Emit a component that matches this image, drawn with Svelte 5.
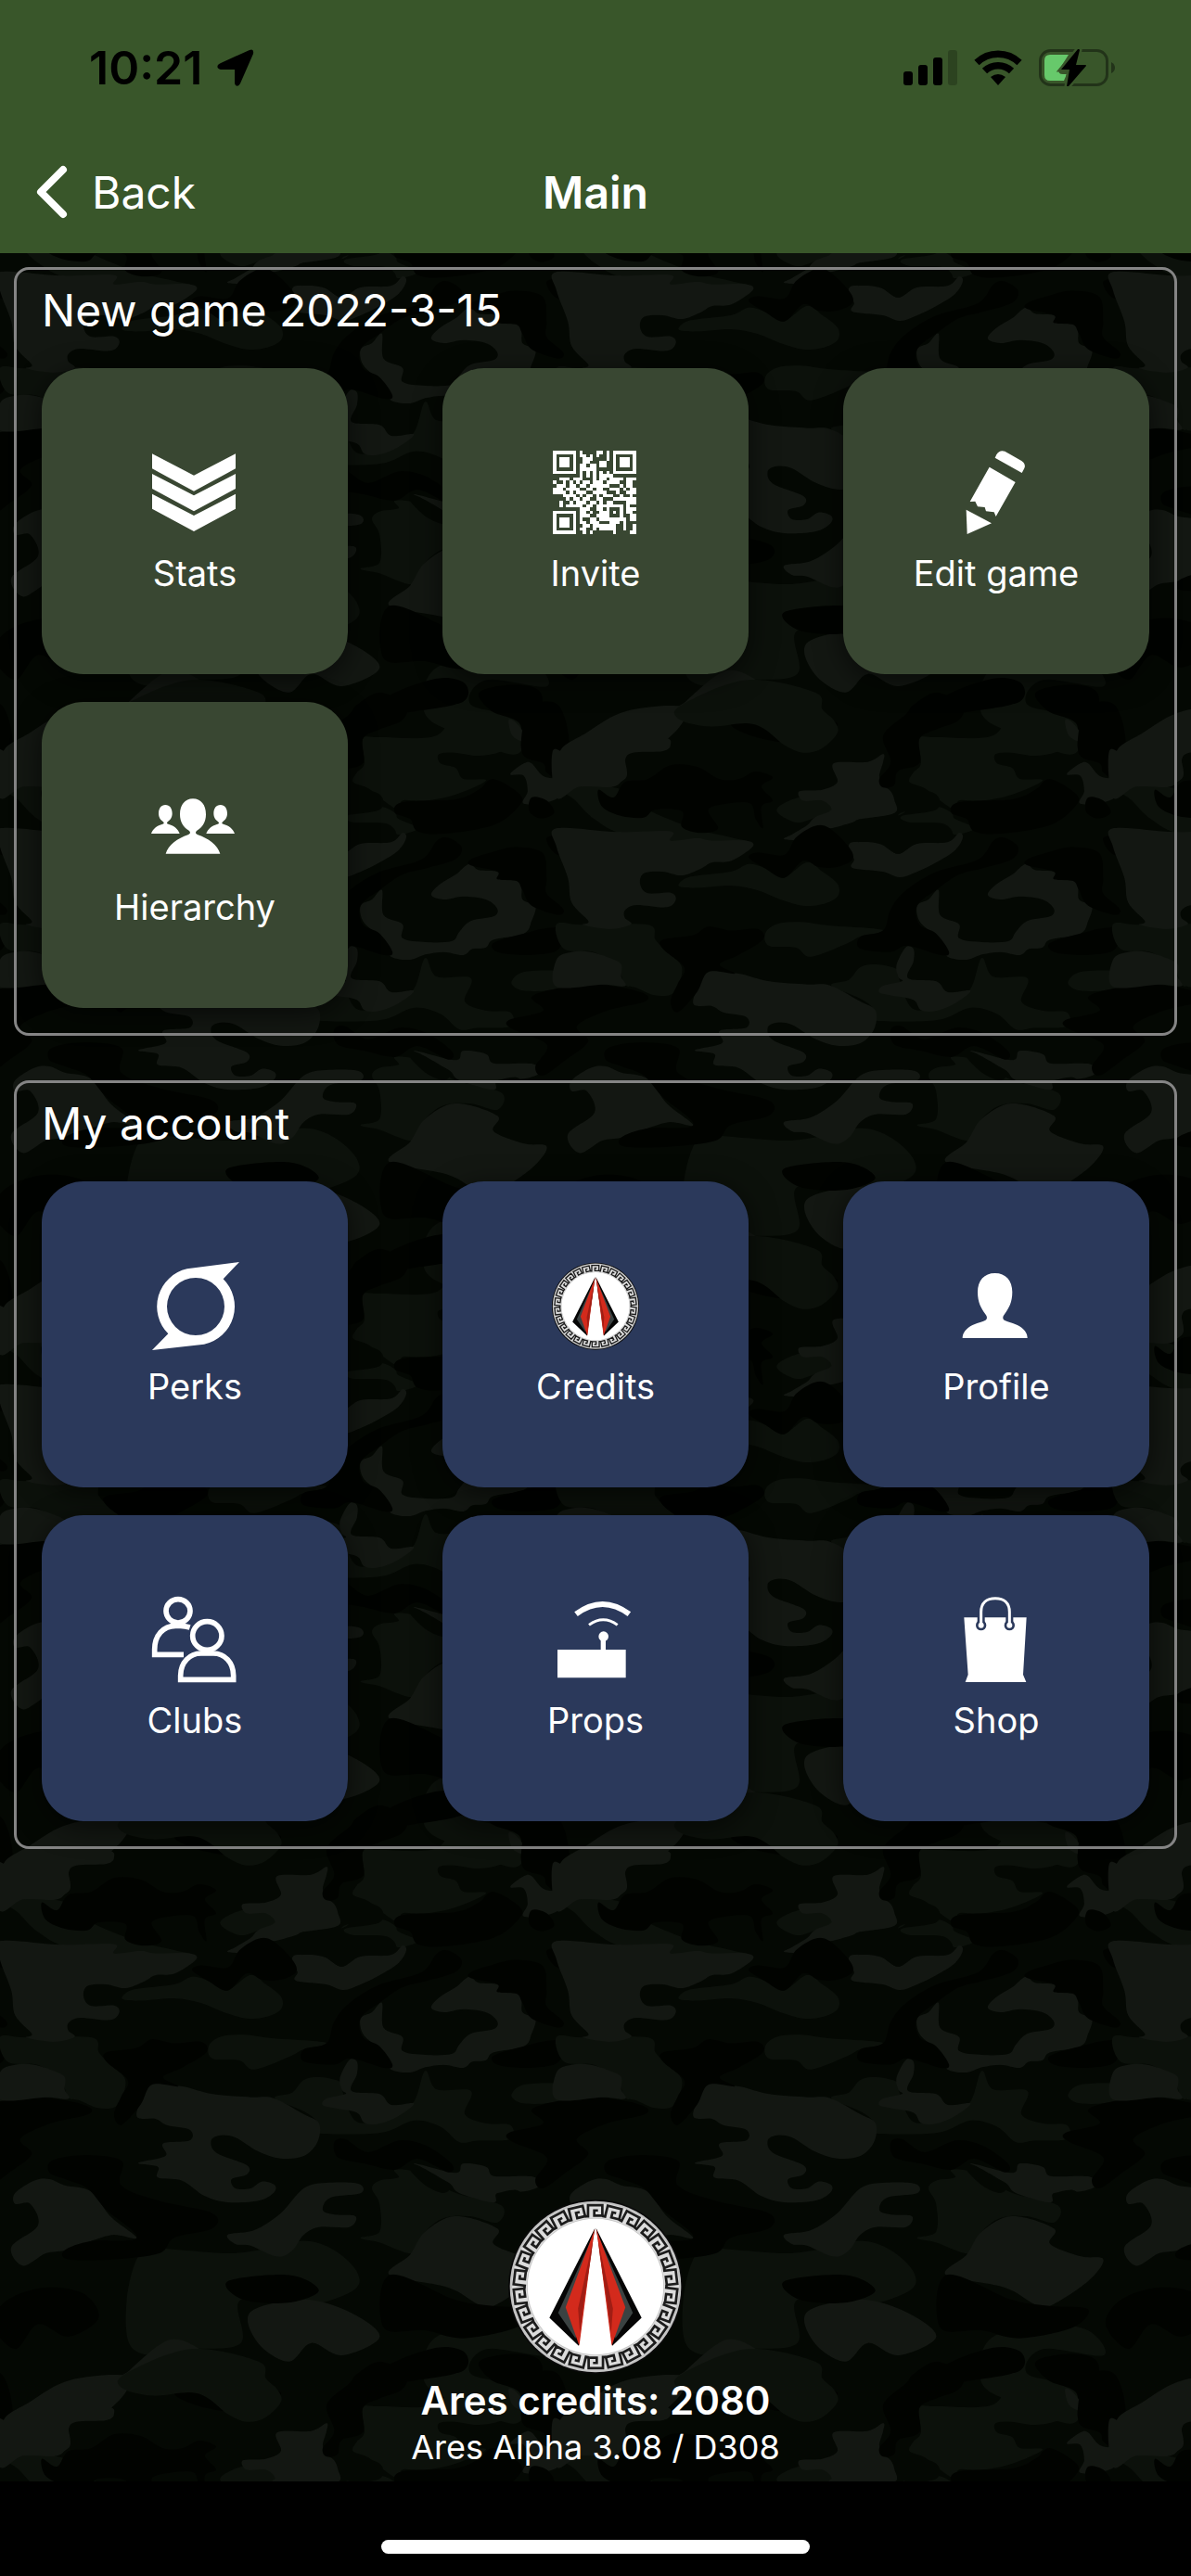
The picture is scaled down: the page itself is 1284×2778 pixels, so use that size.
<script lang="ts">
  const sections = [
    {
      title: "New game 2022-3-15",
      tone: "green",
      items: ["Stats", "Invite", "Edit game", "Hierarchy"],
    },
    {
      title: "My account",
      tone: "blue",
      items: ["Perks", "Credits", "Profile", "Clubs", "Props", "Shop"],
    },
  ];

  const credits = 2080;
  const keys = Array.from({ length: 26 }, (_, i) => (i * 360) / 26);

  const qrRows = [
    "1111111010000110101111111",
    "1000001011010100101000001",
    "1011101001110000101011101",
    "1011101001100011001011101",
    "1011101011011011001011101",
    "1000001011111000001000001",
    "1111111010101010101111111",
    "0000000010101011110000000",
    "0011101110001011011110111",
    "1001010101101110111100110",
    "0111011011011111100010110",
    "1110111100110110011101011",
    "1111010111001111000100111",
    "0001111010110101110010010",
    "0000101101100110001111111",
    "0010010111011010110000111",
    "0010111110110111111110100",
    "0000000011100110100010111",
    "1111111011010011101010110",
    "1000001011100111100010011",
    "1011101010011011111111011",
    "1011101011011100011101000",
    "1011101001101111111001001",
    "1000001011001011111001001",
    "1111111001010000001000011",
  ];
  const qrPath = qrRows
    .map((row, y) =>
      [...row].map((c, x) => (c === "1" ? `M${x} ${y}h1v1h-1z` : "")).join(""),
    )
    .join("");

  // closed smooth curve through a list of points
  const blob = (text: string) => {
    const n = text.split(" ").map((p) => p.split(",").map(Number));
    const at = (i: number) => n[(i + n.length) % n.length];
    let d = `M${n[0]}`;
    for (let i = 0; i < n.length; i++) {
      const [a, b, c, e] = [at(i - 1), at(i), at(i + 1), at(i + 2)];
      d += `C${b[0] + (c[0] - a[0]) / 6},${b[1] + (c[1] - a[1]) / 6} ${c[0] - (e[0] - b[0]) / 6},${c[1] - (e[1] - b[1]) / 6} ${c}`;
    }
    return d + "Z";
  };

  const camo = [
    {
      color: "#0c110b",
      shapes: [
        "165,0 160,45 200,70 250,60 275,80 300,130 325,155 350,140 370,90 365,50 350,15 340,-40 250,-80",
        "478,110 500,105 575,100 600,0 610,30 640,60 665,110 660,150 630,165 600,155 578,160 580,190 600,205 610,240 640,245 600,290 560,310 530,310 525,340 500,300 485,270 465,250 470,220 480,190",
        "10,270 80,270 120,340 180,400 230,430 250,445 180,450 90,420 50,370 25,310",
        "450,360 460,345 500,330 520,350 525,370 550,400 525,420 515,395 500,385 460,382",
        "165,570 180,555 230,540 255,515 285,540 300,560 330,510 350,540 370,580 370,620 350,645 325,650 295,630 265,600 230,585 185,592 162,588",
        "275,740 290,710 320,703 360,715 420,725 430,735 400,750 380,775 335,815 315,785 280,780",
        "0,710 35,712 120,712 130,760 145,800 165,850 155,930 130,940 105,915 90,905 80,850 50,800 10,790",
        "362,908 385,890 400,850 420,840 448,855 450,880 470,985 515,965 545,920 560,820 575,880 620,885 612,960 640,990 672,995 672,1040 630,1045 605,1050 580,1000 545,980 500,1020 415,1020 418,985 400,950",
        "675,890 690,865 730,860 750,870 745,910 720,925 690,925 676,910",
        "490,1200 500,1175 525,1165 520,1140 550,1150 600,1215 660,1255 655,1310 620,1290 585,1295 560,1340 545,1410 500,1375 475,1360 500,1340 500,1250",
        "180,1430 200,1395 240,1400 300,1410 340,1400 400,1370 440,1400 470,1470 465,1530 400,1580 317,1560 317,1700 250,1720 200,1740 170,1700 167,1560",
        "570,1690 640,1640 700,1660 720,1740 640,1720 620,1800 690,1850 680,1960 610,1900 560,1830",
        "320,300 355,310 362,340 340,365 315,380 290,340",
      ],
    },
    {
      color: "#131712",
      shapes: [
        "-5,150 20,170 50,170 60,120 65,100 140,105 150,130 140,150 100,155 90,180 88,230 75,265 30,265 0,300",
        "0,400 80,412 150,410 150,440 185,432 205,440 250,440 258,460 230,505 205,510 190,530 165,552 140,540 115,545 110,580 120,610 150,608 157,630 145,655 105,648 90,665 90,690 98,710 70,725 35,712 42,700 20,640 15,560 0,460",
        "365,190 410,185 430,160 430,185 425,230 430,260 440,280 445,310 445,350 400,370 390,380 360,400 350,395 330,435 300,435 310,420 330,390 340,365 362,340 350,310 325,310 320,280 350,275 370,250",
        "690,190 672,225 690,230 695,280 690,320 728,310 760,250 735,240 715,230 700,190",
        "670,50 680,60 692,100 690,120 675,100",
        "390,445 425,450 450,483 475,450 515,445 530,415 535,430 525,470 500,510 475,540 452,558 430,540 390,528 392,500 385,470",
        "618,515 630,535 655,540 660,565 685,575 688,630 705,650 700,700 690,740 650,760 640,785 622,790 610,810 585,800 560,808 540,825 515,815 510,780 495,740 478,700 475,650 490,630 503,600 505,680 530,710 530,755 560,768 595,765 605,735 620,700 650,685 655,660 640,630 610,620 585,630 568,615 580,580 600,550",
        "200,860 240,870 280,895 330,905 360,908 400,960 420,990 418,1050 400,1095 370,1103 340,1080 310,1035 290,1028 278,1045 285,1085 325,1125 325,1155 305,1170 310,1200 330,1200 345,1178 362,1190 360,1215 340,1240 300,1245 270,1225 240,1175 208,1165 208,1130 182,1118 218,1095 215,1055 250,1045 250,1010 220,995 205,975 180,965 195,870",
        "448,840 460,785 470,790 470,830 463,885 500,895 515,930 545,925 525,965 500,990 480,988 470,955 440,940 425,930 430,910 455,895 450,880",
        "0,825 20,800 45,800 70,820 85,840 85,880 90,910 60,905 0,912",
        "545,1120 600,1150 610,1120 640,1130 650,1160 690,1160 705,1165 712,1190 690,1210 655,1215 650,1245 605,1215 590,1180",
        "20,1250 20,1215 45,1175 65,1170 85,1190 120,1210 145,1290 180,1360 150,1350 120,1370 85,1400 60,1410 30,1450 15,1390 50,1320 40,1250",
        "300,1350 335,1335 370,1280 400,1200 430,1182 472,1185 475,1215 435,1230 425,1270 440,1285 468,1290 460,1325 420,1325 400,1350 385,1400 365,1420 330,1385 310,1380",
        "540,1415 560,1340 600,1290 655,1330 650,1380 690,1420 720,1430 700,1500 650,1580 630,1575 590,1520 513,1480",
        "170,1790 224,1690 270,1730 290,1770 240,1820 165,1810",
        "4,1960 40,1890 93,1820 170,1810 146,1910 93,1950 90,2040 40,2070",
        "330,1600 400,1560 460,1600 500,1680 450,1740 410,1700 380,1760 340,1700",
      ],
    },
    {
      color: "#040803",
      shapes: [
        "388,400 400,370 440,365 460,340 445,290 460,265 500,290 500,340 455,360 465,380 510,385 520,430 475,445 450,483 425,448 390,440",
        "535,1125 550,1125 590,1185 585,1215 560,1190",
        "655,1220 680,1205 690,1235 670,1250",
      ],
    },
    {
      color: "#010300",
      shapes: [
        "55,275 75,300 90,250 120,240 150,195 185,200 215,240 240,240 262,215 285,235 270,265 285,310 270,330 272,400 262,370 255,320 225,320 200,340 213,400 190,415 165,395 165,345 130,340 115,365 85,360 60,330",
        "430,100 460,30 470,0 500,-40 535,0 530,50 500,80 478,110 478,190 450,215 445,260 430,268 425,240 440,185",
        "650,240 685,290 683,330 650,390 585,418 550,410 540,370 520,350 530,315 600,305 630,275",
        "340,392 360,400 385,460 390,500 370,525 345,525 325,505 300,560 275,530 253,495 265,478 300,485 315,430",
        "590,430 608,460 600,500 560,530 530,550 500,600 475,650 478,710 500,740 517,800 505,810 462,780 440,800 400,790 400,750 430,730 440,660 460,600 500,540 555,500 575,440",
        "680,460 715,480 720,560 720,610 742,660 735,680 700,650 688,600 680,570 655,565 655,540 620,520 620,500 650,475",
        "200,717 230,730 265,725 272,760 240,810 215,840 235,870 200,865 185,930 160,995 150,960 160,900 168,850 140,790 140,760 180,745",
        "650,770 690,740 730,720 775,740 782,775 765,780 745,765 730,800 690,810 655,800",
        "700,945 740,915 790,905 845,930 850,960 800,990 760,1040 775,1090 745,1150 715,1200 705,1170 720,1100 675,1050 670,1020 715,990",
        "68,1110 110,1092 160,1110 160,1190 210,1240 280,1280 280,1330 230,1360 210,1410 150,1430 90,1430 85,1400 120,1370 180,1360 140,1270 115,1200 85,1170 65,1150",
        "440,1050 455,1040 485,1082 525,1045 560,1060 595,1120 590,1148 550,1105 520,1140 480,1120 445,1100",
        "700,300 720,310 730,350 712,368 697,345",
        "690,50 700,0 735,0 750,120 740,240 720,220 715,190 688,160",
        "720,430 745,430 765,490 755,500 730,480",
        "513,1480 600,1560 650,1580 700,1590 680,1650 610,1685 560,1660 505,1650",
        "505,1830 513,1770 575,1715 612,1730 610,1790 550,1820",
        "631,1760 676,1735 712,1760 716,1870 741,1950 716,1980 688,1950 684,1860 647,1820",
        "10,1560 60,1520 110,1540 130,1620 90,1680 50,1640 20,1720 -10,1640",
        "300,1500 380,1480 420,1530 380,1570 320,1560",
        "230,1860 300,1830 370,1860 330,1920 270,1910",
      ],
    },
  ];
  const copies = [-1, 0, 1].flatMap((x) => [-1, 0, 1].map((y) => [x * 733, y * 1800]));
</script>

{#snippet emblem()}
  <circle r="280" fill="#0a0a0a" />
  <circle r="275" fill="#c4c4c4" />
  <circle r="244" fill="none" stroke="#dcdcdc" stroke-width="48" />
  {#each keys as angle}
    <path
      transform="rotate({angle})"
      d="M-34 -226H-24V-262H22V-228H-4V-245H8"
      fill="none"
      stroke="#1c1c1c"
      stroke-width="8"
    />
  {/each}
  <circle r="218" fill="#fff" />
  {#each [1, -1] as side}
    <g transform="scale({side} 1)">
      <path d="M-2 -188L-148 100L-54 190L-12 -130Z" fill="#050505" />
      <path d="M-6 -168L-120 84L-64 166L-30 0Z" fill="#3b4242" />
      <path d="M-2 -186L-96 66L-52 190L-12 -120Z" fill="#d32a1c" />
      <path d="M-8 -150L-56 70L-50 150L-36 40L-14 -100Z" fill="#a01d14" />
    </g>
  {/each}
{/snippet}

{#snippet icon(name: string)}
  {#if name === "Stats"}
    <svg class="icon" viewBox="96 72 288 288">
      {#each [0, 65, 130] as y}
        <path transform="translate(0 {y})" d="M102 88L237 158L372 88V136L237 209L102 136Z" />
      {/each}
    </svg>
  {:else if name === "Invite"}
    <svg class="icon" viewBox="72 72 288 288" shape-rendering="crispEdges">
      <path transform="translate(78 78) scale(10.8)" d={qrPath} />
    </svg>
  {:else if name === "Edit game"}
    <svg class="icon" viewBox="198 72 288 288">
      <path d="M338 101L343 91Q353 74 370 80L424 111Q439 121 433 135L425 150Z" />
      <path d="M320 131L404 180L341 291L335 277L309 274L305 261L282 259L274 242L257 243Z" />
      <path d="M245 269L327 313L248 348Z" />
    </svg>
  {:else if name === "Hierarchy"}
    <svg class="icon" viewBox="186 42 288 288">
      <path
        d="M324 94C298 94 282 114 282 145C282 170 294 187 309 196C318 202 316 208 308 211C275 222 244 244 236 272H412C404 244 373 222 340 211C332 208 330 202 339 196C354 187 366 170 366 145C366 114 350 94 324 94Z"
      />
      {#each [235, 413] as x}
        <path
          transform="translate({x} 0)"
          d="M0 114C-14 114 -22 125 -22 142C-22 155 -15 164 -8 168C-3 172 -4 175 -9 176C-27 181 -41 191 -46 207H46C41 191 27 181 9 176C4 175 3 172 8 168C15 164 22 155 22 142C22 125 14 114 0 114Z"
        />
      {/each}
    </svg>
  {:else if name === "Perks"}
    <svg class="icon" viewBox="66 63 288 288">
      <path
        fill-rule="evenodd"
        d="M354 63L302 118A125 125 0 0 1 240 329L72 348L124 295A125 125 0 0 1 185 85ZM213 114A93 93 0 1 0 213 300A93 93 0 1 0 213 114Z"
      />
    </svg>
  {:else if name === "Credits"}
    <svg class="icon" viewBox="-286 -284 572 572">{@render emblem()}</svg>
  {:else if name === "Profile"}
    <svg class="icon" viewBox="0 0 288 288">
      <path
        d="M140 36C105 36 84 60 84 97C84 130 95 150 108 167C116 177 116 184 108 189C96 195 70 200 54 212C42 222 35 232 35 246H245C245 232 238 222 226 212C210 200 184 195 172 189C164 184 164 177 172 167C185 150 196 130 196 97C196 60 175 36 140 36Z"
      />
    </svg>
  {:else if name === "Clubs"}
    <svg class="icon line" viewBox="0 0 288 288" stroke-width="17">
      <ellipse cx="90" cy="49" rx="39" ry="38" />
      <path d="M108 190H14V174C14 128 42 97 82 97H98Q112 97 128 102" />
      <ellipse cx="184" cy="129" rx="47" ry="46" />
      <path d="M98 271V258C98 215 128 186 164 186H204C240 186 269 215 269 258V271Z" />
    </svg>
  {:else if name === "Props"}
    <svg class="icon" viewBox="0 0 288 288">
      <path d="M21 174H161V140H177V174H242V265H21Z" />
      <circle cx="170" cy="131" r="16" />
      <path d="M81 59Q167 -5 253 59" fill="none" stroke="#fff" stroke-width="18" />
      <path d="M123 94Q169 60 215 94" fill="none" stroke="#fff" stroke-width="9" />
    </svg>
  {:else}
    <svg class="icon" viewBox="78 63 288 288">
      <path d="M118 133H320L309 318L319 342H122L131 318Z" />
      <path d="M173 125V158M265 125V158" stroke="#2b395b" stroke-width="24" />
      <circle cx="173" cy="158" r="17" fill="#2b395b" />
      <circle cx="265" cy="158" r="17" fill="#2b395b" />
      <circle cx="173" cy="158" r="9" />
      <circle cx="265" cy="158" r="9" />
      <path
        d="M173 158V115C173 86 191 71 219 71S265 86 265 115V158"
        fill="none"
        stroke="#fff"
        stroke-width="9"
      />
    </svg>
  {/if}
{/snippet}

<div class="app">
  <header>
    <div class="status">
      <div class="time">
        <span>10:21</span>
        <svg width="40" height="40" viewBox="0 0 40 40">
          <path d="M35 1Q40 -1 39 5L25 37Q23 41 20 39Q19 38 19 36V22H4Q-1 21 1 17Q2 16 4 15Z" />
        </svg>
      </div>
      <div class="signals">
        <svg width="58" height="38" viewBox="0 0 58 38">
          <rect x="0" y="23" width="10" height="15" rx="3" />
          <rect x="16" y="16" width="10" height="22" rx="3" />
          <rect x="32" y="8" width="10" height="30" rx="3" />
          <rect x="48" y="0" width="10" height="38" rx="3" opacity=".22" />
        </svg>
        <svg width="52" height="38" viewBox="0 0 52 38">
          <g fill="none" stroke="#000" stroke-width="7.5">
            <path d="M3 13.500A33 33 0 0 1 49 13.500" />
            <path d="M11.500 22.500A21 21 0 0 1 40.500 22.500" />
          </g>
          <path d="M18 29Q26 23 34 29L26 38Z" />
        </svg>
        <svg width="84" height="40" viewBox="0 0 84 40">
          <rect x="1.500" y="1.500" width="72" height="37" rx="11" fill="none" stroke="#000" stroke-opacity=".4" stroke-width="3" />
          <path d="M78 14Q82 16 82 20T78 26Z" opacity=".4" />
          <path d="M12 6H32L22 22Q20 27 26 27H30L27 34H12Q6 34 6 28V12Q6 6 12 6Z" fill="#67c96b" />
          <path
            d="M42 0L24 22H33L30 40Q31 41 32 40L51 18Q51 17 50 17H40L44 1Q43 -1 42 0Z"
            stroke="#39562a"
            stroke-width="5"
            paint-order="stroke"
          />
        </svg>
      </div>
    </div>
    <nav>
      <button class="back" type="button">
        <svg width="34" height="58" viewBox="0 0 34 58">
          <path d="M29 5L5 29L29 53" />
        </svg>
        Back
      </button>
      <h1>Main</h1>
    </nav>
  </header>

  <main>
    <svg class="camo" aria-hidden="true">
      <defs>
        <g id="patches">
          {#each camo as layer}
            <path fill={layer.color} d={layer.shapes.map(blob).join("")} />
          {/each}
        </g>
        <pattern id="camo" width="600" height="600" patternUnits="userSpaceOnUse">
          <rect width="600" height="600" fill="#040803" />
          <g transform="scale(.8186 .33333) translate(0 -339)">
            {#each copies as [x, y]}
              <use href="#patches" {x} {y} />
            {/each}
          </g>
        </pattern>
      </defs>
      <rect width="100%" height="100%" fill="url(#camo)" />
    </svg>

    {#each sections as section}
      <section class={section.tone}>
        <h2>{section.title}</h2>
        <div class="grid">
          {#each section.items as item}
            <button class="tile" type="button">
              {@render icon(item)}
              <span>{item}</span>
            </button>
          {/each}
        </div>
      </section>
    {/each}

    <footer>
      <svg class="logo" viewBox="-280 -280 560 560">{@render emblem()}</svg>
      <strong>Ares credits: {credits}</strong>
      <span>Ares Alpha 3.08 / D308</span>
    </footer>
  </main>

  <div class="home"></div>
</div>

<style>
  :global(body) {
    margin: 0;
    background: #000;
  }

  .app {
    display: flex;
    flex-flow: column nowrap;
    min-height: 100vh;

    font-family: Inter, "Liberation Sans", sans-serif;
    color: white;
  }

  svg {
    display: block;
  }

  header {
    background: #39562a;
  }

  .status {
    display: flex;
    justify-content: space-between;
    align-items: center;
    height: 146px;
    padding: 0 80px 0 96px;

    font-size: 50px;
    font-weight: 600;
    color: black;
  }

  .time,
  .signals {
    display: flex;
    align-items: center;
    gap: 18px;
  }

  .time {
    gap: 16px;
  }

  nav {
    display: grid;
    grid-template-columns: 1fr auto 1fr;
    align-items: center;
    height: 122px;
    padding: 0 39px 5px;
  }

  .back {
    display: flex;
    align-items: center;
    justify-self: start;
    gap: 26px;
    padding: 0;
    border: none;
    background: transparent;

    font: inherit;
    font-size: 48px;
    color: inherit;
    cursor: pointer;
  }

  .back path {
    fill: none;
    stroke: white;
    stroke-width: 8;
    stroke-linecap: round;
    stroke-linejoin: round;
  }

  h1 {
    margin: 0;
    font-size: 48px;
    font-weight: 600;
  }

  main {
    position: relative;
    display: flex;
    flex: 1;
    flex-flow: column nowrap;
    gap: 48px;
    padding: 15px 15px 12px;
    overflow: hidden;
  }

  .camo {
    position: absolute;
    inset: 0;
    width: 100%;
    height: 100%;
  }

  section {
    position: relative;
    padding: 12px 27px 27px;
    border: 3px solid #858585;
    border-radius: 16px;
  }

  h2 {
    margin: 0 0 30px;
    font-size: 48px;
    font-weight: 400;
    line-height: 64px;
  }

  .grid {
    display: grid;
    grid-template-columns: repeat(3, 330px);
    justify-content: space-between;
    row-gap: 30px;
  }

  .tile {
    display: flex;
    flex-flow: column nowrap;
    justify-content: center;
    align-items: center;
    gap: 16px;
    height: 330px;
    padding: 0;
    border: none;
    border-radius: 45px;
    box-shadow: 0 6px 30px rgba(0, 0, 0, 0.6);

    font: inherit;
    font-size: 38px;
    line-height: 44px;
    color: inherit;
    cursor: pointer;
  }

  .green .tile {
    background: #394732;
  }

  .blue .tile {
    background: #2b395b;
  }

  .icon {
    width: 96px;
    height: 96px;
    fill: white;
  }

  .icon.line {
    fill: none;
    stroke: white;
  }

  footer {
    position: relative;
    display: flex;
    flex-flow: column nowrap;
    align-items: center;
    margin-top: auto;

    font-size: 36px;
    line-height: 50px;
  }

  footer strong {
    font-size: 42px;
    font-weight: 600;
  }

  .logo {
    width: 188px;
    height: 188px;
    margin-bottom: 4px;
  }

  .home {
    width: 36%;
    height: 15px;
    margin: 63px auto 24px;
    border-radius: 8px;
    background: white;
  }
</style>
